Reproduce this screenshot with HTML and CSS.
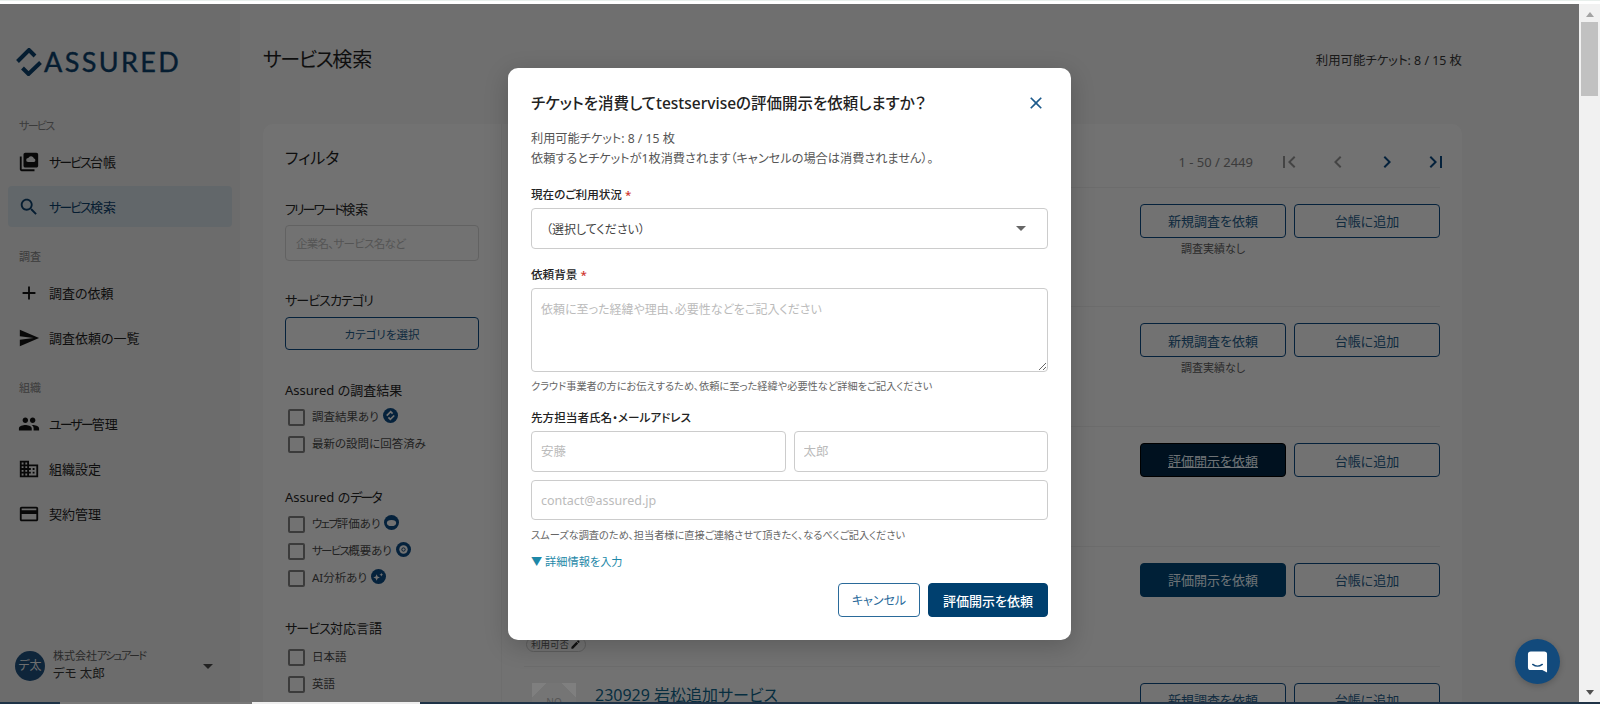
FILE: index.html
```html
<!DOCTYPE html>
<html lang="ja">
<head>
    <meta charset="UTF-8">
    <title>サービス検索</title>
    <link rel="stylesheet" href="styles.css">
</head>
<body>
    <div class="top-strip"></div>
    <div class="window">
        <div class="app">
            <aside class="sidebar">
                <div class="logo">
                    <svg class="logo-mark" viewBox="0 0 26 28"><path d="M1.500 13.500 13 2l6 6M24.500 14.500 12.500 26l-6-6" fill="none" stroke="#0b3a63" stroke-width="4"/></svg>
                    <span class="logo-text">ASSURED</span>
                </div>
                <div class="nav-label first"><span class="tight">サービス</span></div>
                <a class="nav-item">
                    <svg class="nav-icon" viewBox="0 0 24 24"><path d="M4 6H2v14c0 1.100.9 2 2 2h14v-2H4V6zm16-4H8c-1.100 0-2 .9-2 2v12c0 1.100.9 2 2 2h12c1.100 0 2-.9 2-2V4c0-1.100-.9-2-2-2z"/><path d="M11 12a2.200 2.200 0 0 1 .2-4.400 3.300 3.300 0 0 1 6.200.5 2 2 0 0 1 0 3.900z" fill="#d8d8d8"/></svg>
                    <span><span class="tight">サービス</span>台帳</span>
                </a>
                <a class="nav-item active">
                    <svg class="nav-icon" viewBox="0 0 24 24"><path d="M15.500 14h-.79l-.28-.27C15.410 12.590 16 11.110 16 9.500 16 5.910 13.090 3 9.500 3S3 5.910 3 9.500 5.910 16 9.500 16c1.610 0 3.090-.59 4.230-1.570l.27.28v.79l5 4.990L20.490 19l-4.990-5zm-6 0C7.010 14 5 11.990 5 9.500S7.010 5 9.500 5 14 7.010 14 9.500 11.990 14 9.500 14z"/></svg>
                    <span><span class="tight">サービス</span>検索</span>
                </a>
                <div class="nav-label">調査</div>
                <a class="nav-item">
                    <svg class="nav-icon" viewBox="0 0 24 24"><path d="M19 13h-6v6h-2v-6H5v-2h6V5h2v6h6v2z"/></svg>
                    調査の依頼
                </a>
                <a class="nav-item">
                    <svg class="nav-icon" viewBox="0 0 24 24"><path d="M2.010 21 23 12 2.010 3 2 10l15 2-15 2z"/></svg>
                    調査依頼の一覧
                </a>
                <div class="nav-label">組織</div>
                <a class="nav-item">
                    <svg class="nav-icon" viewBox="0 0 24 24"><path d="M16 11c1.660 0 2.990-1.340 2.990-3S17.660 5 16 5c-1.660 0-3 1.340-3 3s1.340 3 3 3zm-8 0c1.660 0 2.990-1.340 2.990-3S9.660 5 8 5C6.340 5 5 6.340 5 8s1.340 3 3 3zm0 2c-2.330 0-7 1.170-7 3.500V19h14v-2.500c0-2.330-4.670-3.500-7-3.500zm8 0c-.29 0-.62.02-.97.05 1.160.84 1.970 1.970 1.970 3.450V19h6v-2.500c0-2.330-4.670-3.500-7-3.500z"/></svg>
                    <span><span class="tight">ユーザー</span>管理</span>
                </a>
                <a class="nav-item">
                    <svg class="nav-icon" viewBox="0 0 24 24"><path d="M12 7V3H2v18h20V7H12zM6 19H4v-2h2v2zm0-4H4v-2h2v2zm0-4H4V9h2v2zm0-4H4V5h2v2zm4 12H8v-2h2v2zm0-4H8v-2h2v2zm0-4H8V9h2v2zm0-4H8V5h2v2zm10 12h-8v-2h2v-2h-2v-2h2v-2h-2V9h8v10zm-2-8h-2v2h2v-2zm0 4h-2v2h2v-2z"/></svg>
                    組織設定
                </a>
                <a class="nav-item">
                    <svg class="nav-icon" viewBox="0 0 24 24"><path d="M20 4H4c-1.110 0-1.990.89-1.990 2L2 18c0 1.110.89 2 2 2h16c1.110 0 2-.89 2-2V6c0-1.110-.89-2-2-2zm0 14H4v-6h16v6zm0-10H4V6h16v2z"/></svg>
                    契約管理
                </a>
                <div class="account">
                    <div class="avatar">デ太</div>
                    <div class="account-text">
                        <div class="company">株式会社<span class="tight">アシュアード</span></div>
                        <div class="user">デモ 太郎</div>
                    </div>
                    <span class="caret dark"></span>
                </div>
            </aside>

            <main class="main">
                <header class="page-header">
                    <h1><span class="tight-soft">サービス</span>検索</h1>
                    <div class="tickets">利用可能チケット: 8 / 15 枚</div>
                </header>
                <section class="card">
                    <div class="filters">
                        <h2>フィルタ</h2>
                        <div class="filter-title keyword"><span class="tight">フリーワード</span>検索</div>
                        <input class="keyword-input" type="text" placeholder="企業名、サービス名など">
                        <div class="filter-title category"><span class="tight-soft">サービスカテゴリ</span></div>
                        <button class="btn btn-outline category-btn">カテゴリを選択</button>

                        <div class="filter-title group-one">Assured の調査結果</div>
                        <div class="check-list">
                            <label class="check-row"><span class="box"></span><span>調査結果あり</span>
                                <svg class="badge" viewBox="0 0 16 16"><circle cx="8" cy="8" r="8"/><path d="M4 8.200 8.200 4l2 2M12 8l-4.200 4-2-2" fill="none" stroke="#e5e5e5" stroke-width="1.800"/></svg>
                            </label>
                            <label class="check-row"><span class="box"></span><span>最新の設問に回答済み</span></label>
                        </div>

                        <div class="filter-title group-two">Assured の<span class="tight">データ</span></div>
                        <div class="check-list">
                            <label class="check-row"><span class="box"></span><span><span class="tight">ウェブ</span>評価あり</span>
                                <svg class="badge" viewBox="0 0 16 16"><circle cx="8" cy="8" r="8"/><ellipse cx="8" cy="8.500" rx="5" ry="3.300" fill="#e5e5e5"/></svg>
                            </label>
                            <label class="check-row"><span class="box"></span><span><span class="tight">サービス</span>概要あり</span>
                                <svg class="badge" viewBox="0 0 16 16"><circle cx="8" cy="8" r="8"/><circle cx="8" cy="8" r="4.500" fill="#e5e5e5"/><circle cx="8" cy="8" r="1.800" fill="none" stroke="#0b3a63"/></svg>
                            </label>
                            <label class="check-row"><span class="box"></span><span>AI分析あり</span>
                                <svg class="badge" viewBox="0 0 16 16"><circle cx="8" cy="8" r="8"/><path d="M6 5.500 7 8l2.500 1L7 10l-1 2.500L5 10 2.500 9 5 8zM11 4l.6 1.500L13 6l-1.400.6L11 8l-.6-1.400L9 6l1.400-.5z" fill="#e5e5e5"/></svg>
                            </label>
                        </div>

                        <div class="filter-title group-three"><span class="tight-soft">サービス</span>対応言語</div>
                        <div class="check-list lang">
                            <label class="check-row"><span class="box"></span><span>日本語</span></label>
                            <label class="check-row"><span class="box"></span><span>英語</span></label>
                        </div>
                    </div>

                    <div class="results">
                        <div class="result-bar">
                            <span class="range">1 - 50 / 2449</span>
                            <svg class="page-icon off" viewBox="0 0 24 24"><path d="M18.410 16.590 13.820 12l4.590-4.590L17 6l-6 6 6 6zM6 6h2v12H6z"/></svg>
                            <svg class="page-icon off" viewBox="0 0 24 24"><path d="M15.410 7.410 14 6l-6 6 6 6 1.410-1.410L10.830 12z"/></svg>
                            <svg class="page-icon" viewBox="0 0 24 24"><path d="M10 6 8.590 7.410 13.170 12l-4.580 4.590L10 18l6-6z"/></svg>
                            <svg class="page-icon" viewBox="0 0 24 24"><path d="M5.590 7.410 10.180 12l-4.590 4.590L7 18l6-6-6-6zM16 6h2v12h-2z"/></svg>
                        </div>

                        <div class="result-row">
                            <div class="result-info"></div>
                            <div class="result-actions">
                                <div class="action-col">
                                    <button class="btn btn-outline">新規調査を依頼</button>
                                    <div class="action-note">調査実績なし</div>
                                </div>
                                <button class="btn btn-outline">台帳に追加</button>
                            </div>
                        </div>
                        <div class="result-row">
                            <div class="result-info"></div>
                            <div class="result-actions">
                                <div class="action-col">
                                    <button class="btn btn-outline">新規調査を依頼</button>
                                    <div class="action-note">調査実績なし</div>
                                </div>
                                <button class="btn btn-outline">台帳に追加</button>
                            </div>
                        </div>
                        <div class="result-row">
                            <div class="result-info"></div>
                            <div class="result-actions">
                                <div class="action-col">
                                    <button class="btn btn-primary hover">評価開示を依頼</button>
                                </div>
                                <button class="btn btn-outline">台帳に追加</button>
                            </div>
                        </div>
                        <div class="result-row">
                            <div class="result-info">
                                <span class="pill">利用可否<svg viewBox="0 0 24 24"><path d="M3 17.250V21h3.750L17.810 9.940l-3.750-3.750L3 17.250zM20.710 7.040a1 1 0 0 0 0-1.410l-2.340-2.340a1 1 0 0 0-1.410 0l-1.830 1.830 3.750 3.750 1.830-1.830z"/></svg></span>
                            </div>
                            <div class="result-actions">
                                <div class="action-col">
                                    <button class="btn btn-primary">評価開示を依頼</button>
                                </div>
                                <button class="btn btn-outline">台帳に追加</button>
                            </div>
                        </div>
                        <div class="result-row">
                            <div class="result-info named">
                                <div class="thumb">NO</div>
                                <div class="service-name">230929 岩松追加サービス</div>
                            </div>
                            <div class="result-actions">
                                <div class="action-col">
                                    <button class="btn btn-outline">新規調査を依頼</button>
                                </div>
                                <button class="btn btn-outline">台帳に追加</button>
                            </div>
                        </div>
                    </div>
                </section>
            </main>

            <div class="overlay"></div>

            <div class="modal">
                <div class="modal-head">
                    <h3>チケットを消費してtestserviseの評価開示を依頼しますか？</h3>
                    <svg class="close" viewBox="0 0 24 24"><path d="M19 6.410 17.590 5 12 10.590 6.410 5 5 6.410 10.590 12 5 17.590 6.410 19 12 13.410 17.590 19 19 17.590 13.410 12z"/></svg>
                </div>
                <p class="modal-info">利用可能チケット: 8 / 15 枚<br>依頼するとチケットが1枚消費されます（キャンセルの場合は消費されません）。</p>

                <div class="field-label">現在のご利用状況 <span class="req">*</span></div>
                <div class="select">（選択してください）<span class="caret"></span></div>

                <div class="field-label">依頼背景 <span class="req">*</span></div>
                <textarea class="field-area" placeholder="依頼に至った経緯や理由、必要性などをご記入ください"></textarea>
                <div class="help first-help">クラウド事業者の方にお伝えするため、依頼に至った経緯や必要性など詳細をご記入ください</div>

                <div class="field-label contact">先方担当者氏名・メールアドレス</div>
                <div class="name-row">
                    <input class="field" type="text" placeholder="安藤">
                    <input class="field" type="text" placeholder="太郎">
                </div>
                <input class="field email" type="text" placeholder="contact@assured.jp">
                <div class="help second-help">スムーズな調査のため、担当者様に直接ご連絡させて頂きたく、なるべくご記入ください</div>
                <a class="more-link">▼ 詳細情報を入力</a>

                <div class="modal-actions">
                    <button class="btn btn-cancel">キャンセル</button>
                    <button class="btn btn-submit">評価開示を依頼</button>
                </div>
            </div>

            <div class="chat">
                <svg viewBox="0 0 22 24"><path d="M4 1h14a3 3 0 0 1 3 3v19l-5-2.500H4a3 3 0 0 1-3-3V4a3 3 0 0 1 3-3z" fill="#fff"/><path d="M6 14.500c3 2.200 7 2.200 10 0" fill="none" stroke="#124a7c" stroke-width="1.500" stroke-linecap="round"/></svg>
            </div>
        </div>

        <div class="scrollbar">
            <span class="arrow up"></span>
            <div class="thumb-bar"></div>
            <span class="arrow down"></span>
        </div>
    </div>
    <div class="bottom-strip">
        <span class="seg-navy"></span>
        <span class="seg-grey"></span>
        <span class="seg-white"></span>
        <span class="seg-rest"></span>
    </div>
</body>
</html>
```

FILE: styles.css
```css
* {
    box-sizing: border-box;
}
html, body {
    margin: 0;
    height: 704px;
    overflow: hidden;
}
body {
    display: flex;
    flex-direction: column;
    font-family: "Noto Sans", "Noto Sans CJK JP", sans-serif;
    font-feature-settings: "palt";
    color: #1c1c1c;
    background: #fff;
}
input, textarea, button {
    font-family: inherit;
    font-feature-settings: inherit;
}
h1, h2, h3, p {
    margin: 0;
    font-weight: 500;
}
/* kana sit much closer together in the original */
.tight {
    letter-spacing: -0.15em;
}
.tight-soft {
    letter-spacing: -0.07em;
}

.top-strip {
    height: 4px;
    background: #fff;
    border-top: 1px solid #e8efec;
}
.window {
    display: flex;
    height: 698px;
}
.app {
    position: relative;
    display: flex;
    width: 1579px;
    overflow: hidden;
    background: #dedede;
}
.overlay {
    position: absolute;
    inset: 0;
    background: rgba(0, 0, 0, 0.5);
}

/* sidebar */
.sidebar {
    display: flex;
    flex-direction: column;
    width: 240px;
    padding: 44px 8px 18px;
    background: #d8d8d8;
}
.logo {
    display: flex;
    align-items: center;
    gap: 2px;
    height: 28px;
    margin-left: 8px;
}
.logo-mark {
    width: 26px;
    height: 28px;
}
.logo-text {
    font-family: Lato, sans-serif;
    font-size: 27px;
    font-weight: 400;
    line-height: 28px;
    letter-spacing: 2.400px;
    color: #0b3a63;
    -webkit-text-stroke: 0.4px #0b3a63;
}
.nav-label {
    height: 20px;
    margin: 16px 0 5px 11px;
    font-size: 11px;
    line-height: 20px;
    color: #777;
}
.nav-label.first {
    margin-top: 40px;
}
.nav-item {
    display: flex;
    align-items: center;
    gap: 9px;
    height: 41px;
    margin-bottom: 4px;
    padding-left: 10px;
    border-radius: 4px;
    font-size: 13px;
    font-weight: 400;
}
.nav-icon {
    flex: none;
    width: 22px;
    height: 22px;
    fill: #111;
}
.nav-item.active {
    background: #c5ced4;
    color: #0b3a63;
}
.nav-item.active .nav-icon {
    fill: #0b3a63;
}
.account {
    display: flex;
    align-items: center;
    margin-top: auto;
    padding-left: 7px;
}
.avatar {
    flex: none;
    width: 30px;
    height: 30px;
    border-radius: 50%;
    background: #1d4a75;
    color: #ddd;
    font-size: 12px;
    line-height: 30px;
    text-align: center;
}
.account-text {
    flex: 1;
    margin-left: 8px;
}
.company {
    font-size: 11px;
    line-height: 17px;
    color: #555;
}
.user {
    font-size: 12.500px;
    line-height: 20px;
    color: #333;
}
.caret {
    width: 0;
    height: 0;
    border-left: 5px solid transparent;
    border-right: 5px solid transparent;
    border-top: 5px solid #666;
}
.caret.dark {
    margin: 2px 19px 0 0;
    border-top-color: #444;
}

/* main */
.main {
    flex: 1;
    padding: 0 117px 0 23px;
}
.page-header {
    display: flex;
    align-items: center;
    justify-content: space-between;
    height: 72px;
    margin-bottom: 48px;
    padding-top: 40px;
}
.page-header h1 {
    font-size: 20px;
    font-weight: 400;
    line-height: 32px;
}
.tickets {
    font-size: 12.400px;
    color: #333;
}
.card {
    display: flex;
    height: 700px;
    border-radius: 10px 10px 0 0;
    background: #e5e5e5;
}

/* filters */
.filters {
    flex: none;
    width: 239px;
    padding: 22px 22px 0;
    border-right: 1px solid #dcdcdc;
}
.filters h2 {
    font-size: 16px;
    font-weight: 400;
    line-height: 24px;
}
.filter-title {
    font-size: 13px;
    font-weight: 400;
    line-height: 18px;
    color: #222;
}
.filter-title.keyword {
    margin-top: 30px;
}
.filter-title.category {
    margin-top: 30px;
}
.filter-title.group-one {
    margin-top: 31px;
}
.filter-title.group-two {
    margin-top: 32px;
}
.filter-title.group-three {
    margin-top: 29px;
}
.keyword-input {
    display: block;
    width: 100%;
    height: 36px;
    margin-top: 7px;
    padding: 0 10px;
    border: 1px solid #c4c4c4;
    border-radius: 4px;
    background: transparent;
    font-size: 11.500px;
}
.keyword-input::placeholder {
    color: #aaa;
    letter-spacing: -0.06em;
}
.filters .category-btn {
    display: block;
    width: 100%;
    height: 33px;
    margin-top: 8px;
    font-size: 11.500px;
}
.check-list {
    margin-top: 3px;
}
.check-list.lang {
    margin-top: 5px;
}
.check-row {
    display: flex;
    align-items: center;
    gap: 7px;
    height: 27px;
    padding-left: 3px;
    font-size: 11.500px;
    color: #444;
}
.box {
    flex: none;
    width: 17px;
    height: 17px;
    margin-top: 4px;
    border: 2px solid #777;
    border-radius: 2px;
}
.badge {
    flex: none;
    width: 15px;
    height: 15px;
    margin-left: -3px;
    fill: #0b4478;
}

/* results */
.results {
    flex: 1;
    padding: 0 22px;
}
.result-bar {
    display: flex;
    align-items: center;
    justify-content: flex-end;
    gap: 25px;
    height: 63.500px;
    padding-top: 14px;
    border-bottom: 1px solid #d8d8d8;
}
.range {
    margin-right: -1px;
    font-size: 13px;
    color: #777;
}
.page-icon {
    width: 24px;
    height: 24px;
    fill: #0b4478;
}
.page-icon:last-child {
    margin-right: -8px;
}
.page-icon.off {
    fill: #888;
}
.result-row {
    display: flex;
    height: 119.750px;
    padding-top: 16px;
    border-bottom: 1px solid #d8d8d8;
}
.result-info {
    flex: 1;
    display: flex;
    align-items: flex-end;
    padding: 0 0 14px 2px;
}
.result-info.named {
    align-items: flex-start;
    gap: 19px;
    padding: 0 0 0 8px;
}
.pill {
    display: inline-flex;
    align-items: center;
    gap: 1px;
    height: 15px;
    padding: 0 4px;
    border: 1px solid #bbb;
    border-radius: 8px;
    font-size: 9.500px;
    color: #555;
}
.pill svg {
    width: 11px;
    height: 11px;
    fill: #222;
}
.thumb {
    width: 44px;
    height: 44px;
    padding-top: 12px;
    background:
        linear-gradient(135deg, #fff 10px, transparent 10px),
        linear-gradient(225deg, #fff 10px, transparent 10px),
        #ebebeb;
    color: #aaa;
    font-size: 10px;
    text-align: center;
}
.service-name {
    font-size: 16px;
    font-weight: 400;
    line-height: 24px;
    color: #0e5c80;
}
.result-actions {
    display: flex;
    align-items: flex-start;
    gap: 8px;
}
.action-col {
    width: 146px;
}
.btn {
    height: 34px;
    border-radius: 4px;
    font-size: 13px;
    font-weight: 400;
}
.result-actions .btn {
    width: 146px;
}
.btn-outline {
    border: 1px solid #0b4478;
    background: transparent;
    color: #22567f;
}
.btn-primary {
    border: 1px solid #00406f;
    background: #00406f;
    color: #dfe6ec;
}
.btn-primary.hover {
    border-color: #000;
    background: #00233f;
    text-decoration: underline;
}
.action-note {
    margin-top: 3px;
    font-size: 11px;
    line-height: 16px;
    color: #555;
    text-align: center;
}

/* modal */
.modal {
    position: absolute;
    left: 508px;
    top: 64px;
    width: 563px;
    height: 572px;
    padding: 23px 23px 0;
    border-radius: 10px;
    background: #fff;
    box-shadow: 0 6px 24px rgba(0, 0, 0, 0.2);
}
.modal-head {
    display: flex;
    align-items: center;
    justify-content: space-between;
    height: 24px;
}
.modal-head h3 {
    font-size: 15.500px;
    line-height: 24px;
    color: #222;
}
.close {
    width: 20px;
    height: 20px;
    margin-right: 2px;
    fill: #1b5a8c;
}
.modal-info {
    margin-top: 14px;
    font-size: 12.200px;
    font-weight: 400;
    line-height: 20px;
    color: #555;
}
.field-label {
    margin-top: 17px;
    font-size: 11.600px;
    font-weight: 500;
    line-height: 18px;
    color: #222;
}
.field-label.contact {
    margin-top: 15px;
}
.req {
    color: #d0342c;
}
.select {
    display: flex;
    align-items: center;
    justify-content: space-between;
    height: 41px;
    margin-top: 4px;
    padding: 0 21px 0 14px;
    border: 1px solid #ccc;
    border-radius: 4px;
    font-size: 12px;
    color: #444;
}
.field-area {
    display: block;
    width: 100%;
    height: 84px;
    margin-top: 4px;
    padding: 11px 9px;
    border: 1px solid #ccc;
    border-radius: 4px;
    font-size: 12px;
}
.field {
    display: block;
    width: 100%;
    height: 41px;
    padding: 0 9px;
    border: 1px solid #ccc;
    border-radius: 4px;
    font-size: 12.500px;
}
.field::placeholder, .field-area::placeholder {
    color: #bbb;
}
.name-row {
    display: flex;
    gap: 8px;
    margin-top: 4px;
}
.field.email {
    height: 40px;
    margin-top: 8px;
}
.help {
    font-size: 10.200px;
    line-height: 16px;
    color: #666;
}
.first-help {
    margin-top: 6px;
}
.second-help {
    margin-top: 7px;
}
.more-link {
    display: block;
    margin-top: 10px;
    font-size: 11.200px;
    line-height: 18px;
    color: #1d88a8;
}
.modal-actions {
    display: flex;
    justify-content: flex-end;
    gap: 8px;
    margin-top: 12px;
}
.btn-cancel {
    width: 82px;
    border: 1px solid #2a6a9a;
    background: #fff;
    color: #2a6a9a;
    font-size: 12px;
}
.btn-submit {
    width: 120px;
    border: 1px solid #00406f;
    background: #00406f;
    color: #fff;
    font-weight: 500;
}

/* chat button */
.chat {
    position: absolute;
    left: 1515px;
    top: 635px;
    display: flex;
    align-items: center;
    justify-content: center;
    width: 45px;
    height: 45px;
    border-radius: 50%;
    background: #124a7c;
    box-shadow: 0 2px 6px rgba(0, 0, 0, 0.2);
}
.chat svg {
    width: 21px;
    height: 24px;
    margin-top: 1px;
}

/* browser chrome */
.scrollbar {
    display: flex;
    flex-direction: column;
    align-items: center;
    width: 21px;
    background: #f1f1f1;
}
.thumb-bar {
    width: 17px;
    height: 74px;
    margin-top: 5px;
    background: #c1c1c1;
}
.arrow {
    width: 0;
    height: 0;
    border-left: 4px solid transparent;
    border-right: 4px solid transparent;
}
.arrow.up {
    margin-top: 8px;
    border-bottom: 5px solid #a3a3a3;
}
.arrow.down {
    margin-top: auto;
    margin-bottom: 7px;
    border-top: 5px solid #505050;
}
.bottom-strip {
    display: flex;
    height: 2px;
}
.seg-navy {
    width: 60px;
    background: #1f3347;
}
.seg-grey {
    width: 192px;
    background: #777;
}
.seg-white {
    width: 168px;
    background: #eee;
}
.seg-rest {
    flex: 1;
    background: #1f3347;
}
```
